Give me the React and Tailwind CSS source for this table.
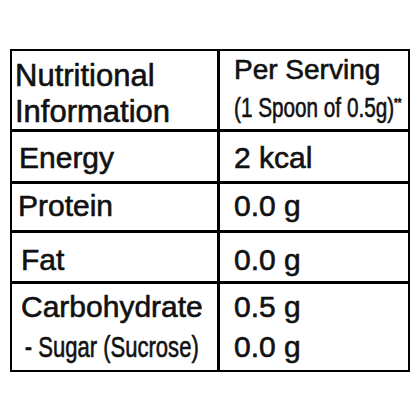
import React from 'react';

const rows = [
    { label: 'Energy', value: '2 kcal', h: 'h-[52px]', pt: 'pt-[8px]', pl: 'pl-[7px]' },
    { label: 'Protein', value: '0.0 g', h: 'h-[49px]', pt: 'pt-[4px]', pl: 'pl-[6px]' },
    { label: 'Fat', value: '0.0 g', h: 'h-[51px]', pt: 'pt-[9px]', pl: 'pl-[9px]' },
];

const App = () => {
    return (
        <div className="w-[420px] h-[420px] bg-white pt-[49px] pl-[10px] text-[#111] font-['Liberation_Sans',Arial,sans-serif] [-webkit-text-stroke:0.6px_#111]">
            <div className="w-[400px] border-2 border-black">
                {/* Header */}
                <div className="grid grid-cols-[205px_1fr] h-[78px]">
                    <div className="pl-[3px] pt-[7px] text-[31px] leading-[36px]">
                        <div>Nutritional</div>
                        <div>Information</div>
                    </div>
                    <div className="border-l-[3px] border-black pl-[14px] pt-[3px] overflow-hidden">
                        <div className="text-[28px] leading-[32px]">Per Serving</div>
                        <div className="mt-[6px] text-[28px] leading-[32px] whitespace-nowrap origin-left scale-x-[0.74]">
                            (1 Spoon of 0.5g)<span className="relative top-[-10px] text-[13px] leading-none">**</span>
                        </div>
                    </div>
                </div>

                {rows.map((row) => (
                    <div key={row.label} className={`grid grid-cols-[205px_1fr] border-t-[3px] border-black ${row.h}`}>
                        <div className={`${row.pl} ${row.pt} text-[30px] leading-[36px]`}>{row.label}</div>
                        <div className={`border-l-[3px] border-black pl-[14px] ${row.pt} text-[30px] leading-[36px]`}>{row.value}</div>
                    </div>
                ))}

                {/* Carbohydrate */}
                <div className="grid grid-cols-[205px_1fr] border-t-[3px] border-black h-[89px]">
                    <div className="pl-[9px] pt-[3px] text-[30px] leading-[40px] overflow-hidden">
                        <div>Carbohydrate</div>
                        <div className="pl-[5px] text-[29px] whitespace-nowrap origin-left scale-x-[0.76]">- Sugar (Sucrose)</div>
                    </div>
                    <div className="border-l-[3px] border-black pl-[14px] pt-[3px] text-[30px] leading-[40px]">
                        <div>0.5 g</div>
                        <div>0.0 g</div>
                    </div>
                </div>
            </div>
        </div>
    );
};

export default App;
